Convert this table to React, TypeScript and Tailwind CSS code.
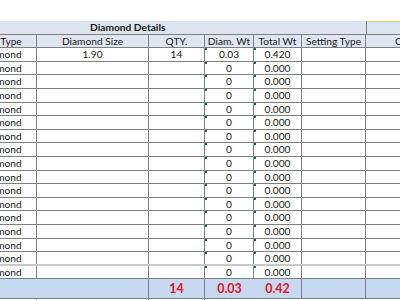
import React from "react";

interface Row {
  type: string;
  size: string;
  qty: string;
  diamWt: string;
  totalWt: string;
}

const rows: Row[] = [
  { type: "Diamond", size: "1.90", qty: "14", diamWt: "0.03", totalWt: "0.420" },
  ...Array.from({ length: 16 }, () => ({
    type: "Diamond",
    size: "",
    qty: "",
    diamWt: "0",
    totalWt: "0.000",
  })),
];

const line = "border-[#7f7f7f]";

// green "number stored as text" corner marker
const Tick = () => (
  <div className="absolute left-0 top-0 h-0 w-0 border-l-[2px] border-t-[2px] border-l-[#16713a] border-t-[#16713a] border-r-transparent border-b-transparent" />
);

export default function App() {
  return (
    <div
      className="h-[300px] w-[400px] overflow-hidden bg-white text-[10.2px] text-[#1a1a1a]"
      style={{ fontFamily: "Lato, 'Open Sans', sans-serif" }}
    >
      <div className="ml-[-63px] pt-[21px] w-[500px]">
        {/* title row */}
        <div className={`flex h-[14px] border-b ${line} bg-[#dce4ef]`}>
          <div className="w-[429px] relative">
            <span className="absolute left-[153px] top-0 font-bold text-[10.2px] leading-[13px]">
              Diamond Details
            </span>
          </div>
          <div className={`w-[71px] border-l ${line} border-t border-t-[#c9d86a]`} />
        </div>

        {/* column headers */}
        <div className={`flex h-[13.3px] border-b ${line} bg-[#dfe6f1] leading-[12.5px]`}>
          <div className={`w-[100px] border-r ${line} pl-[6px] text-center`}>Diamond Type</div>
          <div className={`w-[112px] border-r ${line} text-center`}>Diamond Size</div>
          <div className={`w-[56px] border-r ${line} text-center`}>QTY.</div>
          <div className={`w-[49px] border-r ${line} text-center`}>Diam. Wt</div>
          <div className={`w-[48px] border-r ${line} text-center`}>Total Wt</div>
          <div className={`w-[64px] border-r ${line} text-center`}>Setting Type</div>
          <div className="w-[71px] pl-[29px]">Comments</div>
        </div>

        {/* data rows */}
        {rows.map((r, i) => (
          <div
            key={i}
            className={`flex h-[13.6px] leading-[12.5px] ${
              i === 15 ? "border-b-2 border-[#c8c8c8]" : `border-b ${line}`
            }`}
          >
            <div className={`w-[100px] border-r ${line} pl-[44px]`}>{r.type}</div>
            <div className={`w-[112px] border-r ${line} text-center`}>{r.size}</div>
            <div className={`w-[56px] border-r ${line} text-center`}>{r.qty}</div>
            <div className={`relative w-[49px] border-r ${line} text-center`}>
              <Tick />
              {r.diamWt}
            </div>
            <div className={`relative w-[48px] border-r ${line} text-center`}>
              <Tick />
              {r.totalWt}
            </div>
            <div className={`w-[64px] border-r ${line}`} />
            <div className="w-[71px]" />
          </div>
        ))}

        {/* totals */}
        <div
          className={`flex h-[19.5px] border-b ${line} bg-[#c6d9f1] font-bold text-[12.5px] leading-[19px] text-[#e3151f]`}
        >
          <div className={`w-[212px] border-r ${line}`} />
          <div className={`w-[56px] border-r ${line} text-center`}>14</div>
          <div className="w-[49px] text-center">0.03</div>
          <div className={`w-[48px] border-r ${line} text-center`}>0.42</div>
          <div className={`w-[64px] border-r ${line}`} />
          <div className="w-[71px]" />
        </div>
        <div className="flex h-[10px]">
          <div className={`w-[100px] border-r ${line}`} />
          <div className={`w-[112px] border-r ${line}`} />
          <div className={`w-[56px] border-r ${line}`} />
        </div>
      </div>
    </div>
  );
}
